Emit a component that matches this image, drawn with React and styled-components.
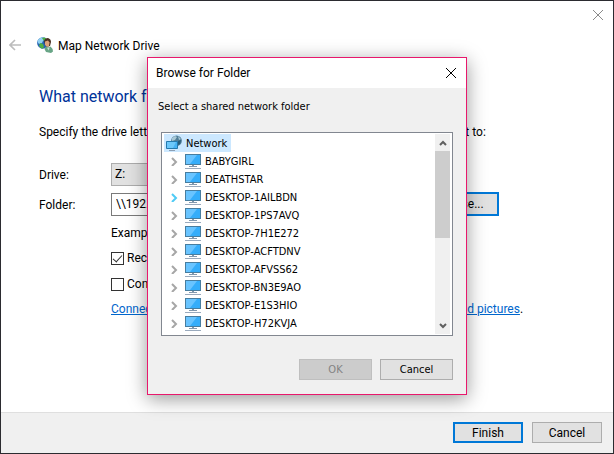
import React, { useState } from "react";
import styled, { createGlobalStyle } from "styled-components";

const GlobalStyle = createGlobalStyle`
    * {
        box-sizing: border-box;
    }

    html, body, #root {
        height: 100%;
        margin: 0;
    }

    body, button, input, select {
        color: #000;
        font-family: Roboto, "Open Sans", sans-serif;
        font-size: 12px;
        line-height: 16px;
    }
`;

const WizardWindow = styled.main`
    background: #fff;
    border: 1px solid #2b2b30;
    display: flex;
    flex-direction: column;
    min-height: 100%;
    overflow: hidden;
    position: relative;
`;

const WizardCaption = styled.div`
    display: flex;
    height: 28px;
    justify-content: flex-end;
    padding: 8px 9px 0 0;
`;

const IconButton = styled.button`
    background: none;
    border: 0;
    display: flex;
    height: 12px;
    padding: 0;
    width: 12px;

    svg {
        display: block;
    }
`;

const WizardHeader = styled.header`
    align-items: center;
    display: flex;
    height: 32px;
    padding-left: 8px;
`;

const WizardIcon = styled.svg`
    display: block;
    margin: 0 5px 0 16px;
`;

const WizardTitle = styled.span`
    padding-top: 2px;
`;

const WizardBody = styled.section`
    flex: 1;
    padding: 24px 38px 0;
`;

const Heading = styled.h1`
    color: #003399;
    font-size: 16px;
    font-weight: 400;
    line-height: 24px;
    margin: 0 0 15px;
    white-space: nowrap;
`;

const Instructions = styled.p`
    margin: 0 0 22px;
    white-space: nowrap;
`;

const Field = styled.div`
    align-items: center;
    display: grid;
    grid-template-columns: 72px 300px 80px;
    height: 24px;
    margin-bottom: 6px;

    label {
        padding-top: 2px;
    }
`;

const DriveSelect = styled.select`
    appearance: none;
    background: #e1e1e1;
    border: 1px solid #adadad;
    border-radius: 0;
    height: 23px;
    padding: 0 3px;
`;

const FolderInput = styled.input`
    background: #fff;
    border: 1px solid #7a7a7a;
    height: 23px;
    padding: 0 4px;
`;

const PushButton = styled.button`
    background: ${({ disabled }) => disabled ? "#cccccc" : "#e1e1e1"};
    border: ${({ $primary }) => $primary ? "2px solid #0078d7" : "1px solid #adadad"};
    color: ${({ disabled }) => disabled ? "#838383" : "#000"};
    height: ${({ $tall }) => $tall ? "24px" : "21px"};
    line-height: 16px;
    padding: 0;
    width: ${({ $width }) => $width || 70}px;

    &:disabled {
        border-color: #bfbfbf;
    }
`;

const BrowseButton = styled(PushButton)`
    margin-left: 8px;
`;

const Options = styled.div`
    padding-left: 72px;
`;

const Example = styled.p`
    margin: 0 0 8px;
    padding-top: 3px;
`;

const CheckLabel = styled.label`
    align-items: center;
    display: flex;
    gap: 3px;
    height: 18px;
    margin-bottom: 8px;
    white-space: nowrap;
`;

const CheckBox = styled.input`
    appearance: none;
    background: #fff;
    border: 1px solid #333;
    display: grid;
    height: 13px;
    margin: 0;
    place-items: center;
    width: 13px;

    &:checked::after {
        border: solid #333;
        border-width: 0 1px 1px 0;
        content: "";
        height: 8px;
        margin-bottom: 2px;
        transform: rotate(42deg);
        width: 4px;
    }
`;

const LinkLine = styled.p`
    margin: 0;
    white-space: nowrap;

    a {
        color: #0066cc;
    }
`;

const WizardFooter = styled.footer`
    background: #f0f0f0;
    border-top: 1px solid #dfdfdf;
    display: flex;
    gap: 9px;
    height: 41px;
    justify-content: flex-end;
    padding: 9px 11px 0;
`;

const Dialog = styled.section`
    background: #f0f0f0;
    border: 1px solid #e8186c;
    box-shadow: 0 4px 18px rgba(0, 0, 0, 0.4);
    left: 146px;
    position: absolute;
    top: 56px;
    width: 320px;
`;

const DialogCaption = styled.header`
    align-items: center;
    background: #fff;
    display: flex;
    height: 30px;
    justify-content: space-between;
    padding: 0 9px 0 8px;
`;

const DialogTitle = styled.h2`
    font-size: 12px;
    font-weight: 400;
    margin: 0;
`;

const DialogBody = styled.div`
    font-family: "DejaVu Sans Condensed", "DejaVu Sans", sans-serif;
    font-size: 11px;
    padding: 11px 13px 14px;
`;

const DialogText = styled.p`
    margin: 0 -3px 17px;
`;

const TreeBox = styled.div`
    background: #fff;
    border: 1px solid #828790;
    display: flex;
    height: 204px;
    justify-content: space-between;
    padding: 1px 2px;
`;

const Tree = styled.ul`
    line-height: 16px;
    list-style: none;
    margin: 0;
    padding: 0;

    ul {
        list-style: none;
        margin: 0;
        padding: 0 0 0 7px;
    }
`;

const RootItem = styled.span`
    align-items: center;
    background: #cce8ff;
    display: inline-flex;
    gap: 4px;
    height: 18px;
    padding: 0 4px 0 2px;
    vertical-align: top;
`;

const TreeRow = styled.li`
    align-items: center;
    display: flex;
    height: 18px;

    svg + svg {
        margin: 0 4px 0 7px;
    }
`;

const NodeName = styled.span`
    padding-top: 2px;
`;

const ScrollBar = styled.div`
    align-items: center;
    background: #f0f0f0;
    display: flex;
    flex-direction: column;
    width: 15px;
`;

const ScrollButton = styled.button`
    background: none;
    border: 0;
    display: grid;
    height: 17px;
    padding: 0;
    place-items: center;
    width: 15px;
`;

const ScrollThumb = styled.div`
    background: #cdcdcd;
    height: 87px;
    margin-bottom: auto;
    width: 15px;
`;

const DialogActions = styled.div`
    display: flex;
    gap: 8px;
    justify-content: flex-end;
    margin-top: 23px;

    button {
        font-family: inherit;
        font-size: 11px;
        padding-top: 1px;
    }
`;

const computers = [
    "BABYGIRL",
    "DEATHSTAR",
    "DESKTOP-1AILBDN",
    "DESKTOP-1PS7AVQ",
    "DESKTOP-7H1E272",
    "DESKTOP-ACFTDNV",
    "DESKTOP-AFVSS62",
    "DESKTOP-BN3E9AO",
    "DESKTOP-E1S3HIO",
    "DESKTOP-H72KVJA",
];

function CloseIcon({ color }) {
    return (
        <svg width="12" height="12" viewBox="0 0 12 12" fill="none" stroke={color}>
            <path d="M1 1l10 10M11 1L1 11" />
        </svg>
    );
}

function BackIcon() {
    return (
        <svg width="12" height="12" viewBox="0 0 12 12" fill="none" stroke="#bcbcbc" strokeWidth="1.6">
            <path d="M12 6H1M6 1L1 6l5 5" />
        </svg>
    );
}

function NetworkDriveIcon() {
    return (
        <WizardIcon width="16" height="16" viewBox="0 0 16 16">
            <circle cx="5.8" cy="6" r="5.7" fill="#2563b4" />
            <path d="M1 3Q3 0 6 .6L8 2 6 4 5 6 2 7 .4 5z" fill="#8fd0f2" />
            <path d="M5 1l3-.6L10 3 7 4zM3 6l3 1 1 3-2 2L2 9z" fill="#4fb043" />
            <path d="M7 4q1-3 4-3 3 1 3 4l-1 4-3 1-2-2z" fill="#4b3023" />
            <path d="M8 4.5l3-1 1.5 2L12 9l-2 1-2-2z" fill="#dca27c" />
            <path d="M7.5 12q0-2 2.5-2.5l2 1 1.5-1q2.5 2 2.5 5l-2 1.5-5-1z" fill="#68a586" />
            <path d="M10 10.5l1.5 3 1-2.5" fill="#c5e0d1" />
        </WizardIcon>
    );
}

function NetworkIcon() {
    return (
        <svg width="16" height="16" viewBox="0 0 16 16">
            <circle cx="10.5" cy="5.8" r="5.4" fill="#517f99" />
            <path d="M6 3l3-2 2 1-2 3-3 1zM12 1l3 3-2 1z" fill="#a9c9d6" />
            <path d="M12 6l3-1-1 4-2 1z" fill="#295d7b" />
            <path d="M.5 6.5h11v7H.5z" fill="#45b2f5" stroke="#2479ae" />
            <path d="M1 7h9l-3 6H1z" fill="#6cc8fb" />
            <path d="M3 15.5h6" stroke="#8ca0b5" />
        </svg>
    );
}

function ComputerIcon() {
    return (
        <svg width="16" height="16" viewBox="0 0 16 16">
            <path d="M0 1h16v11H0z" fill="#477d9f" />
            <path d="M1 2h14v9H1z" fill="#35adfa" />
            <path d="M1 2h11L5 11H1z" fill="#69c4ff" />
            <path d="M7 12h2v1H7zM4 13h8v1H4z" fill="#8298ad" />
            <path d="M0 15h16v1H0z" fill="#9aaabd" />
        </svg>
    );
}

function ExpandIcon({ active }) {
    return (
        <svg width="7" height="10" viewBox="0 0 7 10" fill="none" stroke={active ? "#4fcbf5" : "#a6a6a6"} strokeWidth="2">
            <path d="M1 2l4 4-4 4" />
        </svg>
    );
}

function ScrollArrow({ down }) {
    return (
        <svg width="8" height="6" viewBox="0 0 8 6" fill="none" stroke="#606060" strokeWidth="2">
            <path d={down ? "M1 1l3 3 3-3" : "M1 5l3-3 3 3"} />
        </svg>
    );
}

function BrowseDialog() {
    return (
        <Dialog role="dialog" aria-labelledby="browse-title">
            <DialogCaption>
                <DialogTitle id="browse-title">Browse for Folder</DialogTitle>
                <IconButton aria-label="Close dialog"><CloseIcon color="#000" /></IconButton>
            </DialogCaption>
            <DialogBody>
                <DialogText>Select a shared network folder</DialogText>
                <TreeBox>
                    <Tree>
                        <li>
                            <RootItem><NetworkIcon /><NodeName>Network</NodeName></RootItem>
                            <ul>
                                {computers.map((name) => (
                                    <TreeRow key={name}>
                                        <ExpandIcon active={name === "DESKTOP-1AILBDN"} />
                                        <ComputerIcon />
                                        <NodeName>{name}</NodeName>
                                    </TreeRow>
                                ))}
                            </ul>
                        </li>
                    </Tree>
                    <ScrollBar>
                        <ScrollButton aria-label="Scroll up"><ScrollArrow /></ScrollButton>
                        <ScrollThumb />
                        <ScrollButton aria-label="Scroll down"><ScrollArrow down /></ScrollButton>
                    </ScrollBar>
                </TreeBox>
                <DialogActions>
                    <PushButton $width={73} disabled>OK</PushButton>
                    <PushButton $width={73}>Cancel</PushButton>
                </DialogActions>
            </DialogBody>
        </Dialog>
    );
}

export default function App() {
    const [folder, setFolder] = useState("\\\\192.168.1.10");

    return (
        <>
            <GlobalStyle />
            <WizardWindow>
                <WizardCaption>
                    <IconButton aria-label="Close"><CloseIcon color="#8a8a8a" /></IconButton>
                </WizardCaption>
                <WizardHeader>
                    <IconButton aria-label="Back"><BackIcon /></IconButton>
                    <NetworkDriveIcon />
                    <WizardTitle>Map Network Drive</WizardTitle>
                </WizardHeader>
                <WizardBody>
                    <Heading>What network folder would you like to map?</Heading>
                    <Instructions>Specify the drive letter for the connection and the folder that you want to connect to:</Instructions>
                    <Field>
                        <label htmlFor="drive">Drive:</label>
                        <DriveSelect id="drive"><option>Z:</option></DriveSelect>
                    </Field>
                    <Field>
                        <label htmlFor="folder">Folder:</label>
                        <FolderInput id="folder" value={folder} onChange={(e) => setFolder(e.target.value)} />
                        <BrowseButton $primary $tall $width={80}>Browse...</BrowseButton>
                    </Field>
                    <Options>
                        <Example>Example: \\server\share</Example>
                        <CheckLabel><CheckBox type="checkbox" defaultChecked />Reconnect at sign-in</CheckLabel>
                        <CheckLabel><CheckBox type="checkbox" />Connect using different credentials</CheckLabel>
                        <LinkLine>
                            <a href="#website">Connect to a Web site that you can use to store your documents and pictures</a>.
                        </LinkLine>
                    </Options>
                </WizardBody>
                <WizardFooter>
                    <PushButton $primary>Finish</PushButton>
                    <PushButton>Cancel</PushButton>
                </WizardFooter>
                <BrowseDialog />
            </WizardWindow>
        </>
    );
}
